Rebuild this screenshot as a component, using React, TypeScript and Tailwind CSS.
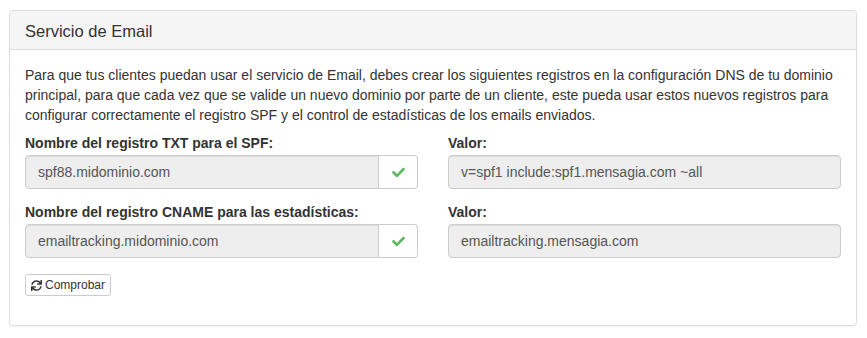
import React from "react";
import { FaCheck, FaSync } from "react-icons/fa";

function ReadonlyField({ value, check }: { value: string; check?: boolean }) {
  return (
    <div className="flex h-[34px]">
      <div
        className={`flex-1 flex items-center px-3 bg-[#eeeeee] border border-[#cccccc] text-[#555555] text-[14px] shadow-[inset_0_1px_1px_rgba(0,0,0,0.075)] ${
          check ? "rounded-l-[4px]" : "rounded-[4px]"
        }`}
      >
        {value}
      </div>
      {check && (
        <div className="w-[39px] flex items-center justify-center bg-white border border-l-0 border-[#cccccc] rounded-r-[4px]">
          <FaCheck className="text-[#5cb85c]" size={13} />
        </div>
      )}
    </div>
  );
}

function Field({ label, value, check }: { label: string; value: string; check?: boolean }) {
  return (
    <div>
      <label className="block font-bold text-[14px] leading-[20px] mb-[2px]">{label}</label>
      <ReadonlyField value={value} check={check} />
    </div>
  );
}

export default function App() {
  return (
    <div
      className="min-h-screen bg-white pt-[10px] pl-[9px] text-[#333333]"
      style={{ fontFamily: '"Liberation Sans", Arial, sans-serif' }}
    >
      <div className="w-[848px] border border-[#dddddd] rounded-[4px] shadow-[0_1px_1px_rgba(0,0,0,0.05)]">
        {/* Heading */}
        <div className="bg-[#f5f5f5] border-b border-[#dddddd] rounded-t-[4px] px-[15px] py-[10px]">
          <h3 className="text-[16.5px] leading-[18px] pt-[1px] -mb-[1px]">Servicio de Email</h3>
        </div>

        {/* Body */}
        <div className="p-[15px] text-[14px] leading-[20px]">
          <p className="mb-[8px]">
            Para que tus clientes puedan usar el servicio de Email, debes crear los siguientes registros en la
            configuración DNS de tu dominio principal, para que cada vez que se valide un nuevo dominio por parte de
            un cliente, este pueda usar estos nuevos registros para configurar correctamente el registro SPF y el
            control de estadísticas de los emails enviados.
          </p>

          <div className="grid grid-cols-2 gap-x-[30px] gap-y-[13px]">
            <Field label="Nombre del registro TXT para el SPF:" value="spf88.midominio.com" check />
            <Field label="Valor:" value="v=spf1 include:spf1.mensagia.com ~all" />
            <Field label="Nombre del registro CNAME para las estadísticas:" value="emailtracking.midominio.com" check />
            <Field label="Valor:" value="emailtracking.mensagia.com" />
          </div>

          <div className="mt-[16px] mb-[14px]">
            <button className="inline-flex items-center gap-[3px] h-[22px] px-[5px] text-[12px] leading-[18px] border border-[#cccccc] rounded-[3px] bg-white text-[#333333]">
              <FaSync size={11} />
              Comprobar
            </button>
          </div>
        </div>
      </div>
    </div>
  );
}
